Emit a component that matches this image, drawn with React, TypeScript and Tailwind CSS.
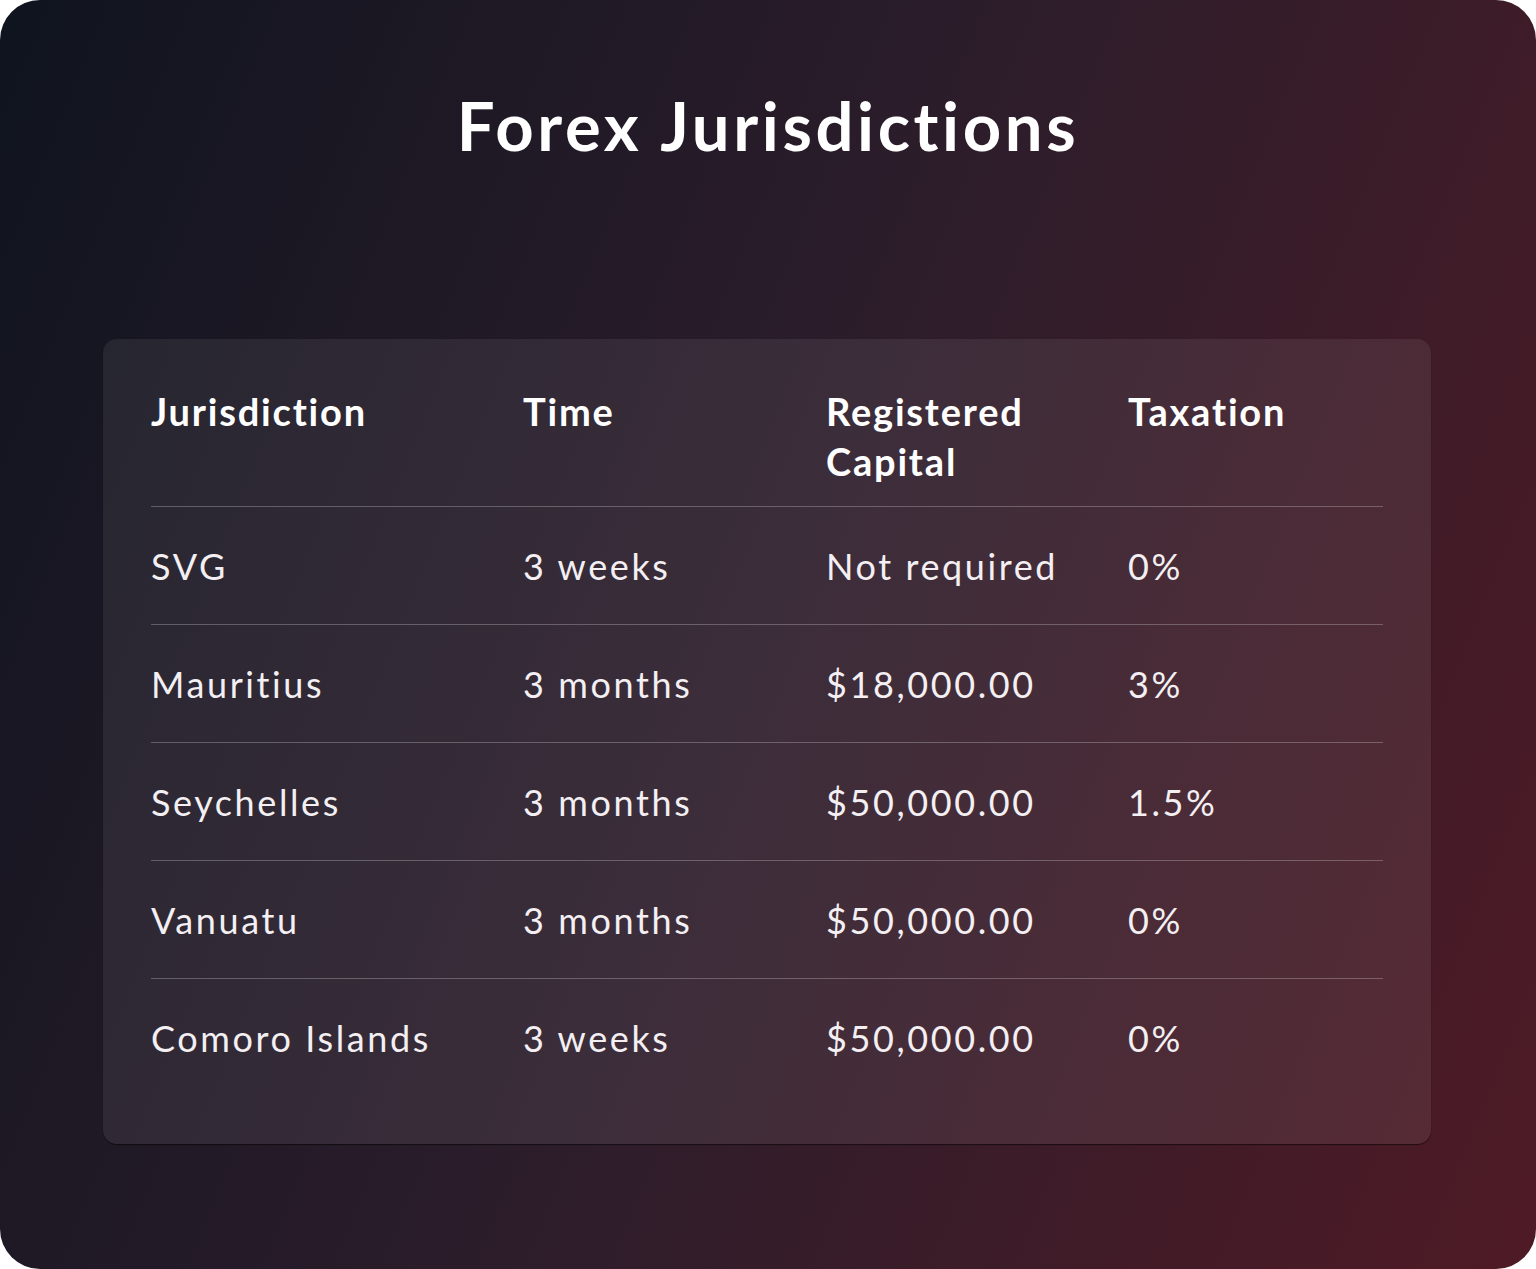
const rows = [
    { name: "SVG", time: "3 weeks", capital: "Not required", tax: "0%" },
    { name: "Mauritius", time: "3 months", capital: "$18,000.00", tax: "3%" },
    { name: "Seychelles", time: "3 months", capital: "$50,000.00", tax: "1.5%" },
    { name: "Vanuatu", time: "3 months", capital: "$50,000.00", tax: "0%" },
    { name: "Comoro Islands", time: "3 weeks", capital: "$50,000.00", tax: "0%" },
];

const cols = "grid grid-cols-[372px_303px_302px_1fr]";

export default function App() {
    return (
        <main className="w-[1536px] h-[1269px] bg-white font-['Lato','Liberation_Sans',sans-serif] [font-variant-ligatures:none]">
            <div className="w-full h-full rounded-[40px] overflow-hidden bg-[linear-gradient(112deg,#0f141f_0%,#2d1d2b_50%,#4e1a25_100%)] pt-[92px]">
                <h1 className="text-center text-white font-bold text-[67px] leading-none tracking-[3.6px]">
                    Forex Jurisdictions
                </h1>

                <section className="mt-[180px] ml-[103px] w-[1328px] rounded-[14px] bg-white/[0.07] shadow-[0_1px_1px_rgba(0,0,0,0.55)] px-[48px] pt-[47px] pb-[47px]">
                    <div className={`${cols} border-b border-white/25 pb-[20px] text-white font-bold text-[38px] leading-[50px] tracking-[1.8px]`}>
                        <div>Jurisdiction</div>
                        <div>Time</div>
                        <div className="pr-4">Registered Capital</div>
                        <div>Taxation</div>
                    </div>

                    {rows.map((r, i) => (
                        <div
                            key={r.name}
                            className={`${cols} items-center h-[118px] text-[#f3eff2] text-[36px] tracking-[2.6px] ${i < rows.length - 1 ? "border-b border-white/25" : ""}`}
                        >
                            <div>{r.name}</div>
                            <div>{r.time}</div>
                            <div>{r.capital}</div>
                            <div>{r.tax}</div>
                        </div>
                    ))}
                </section>
            </div>
        </main>
    );
}
